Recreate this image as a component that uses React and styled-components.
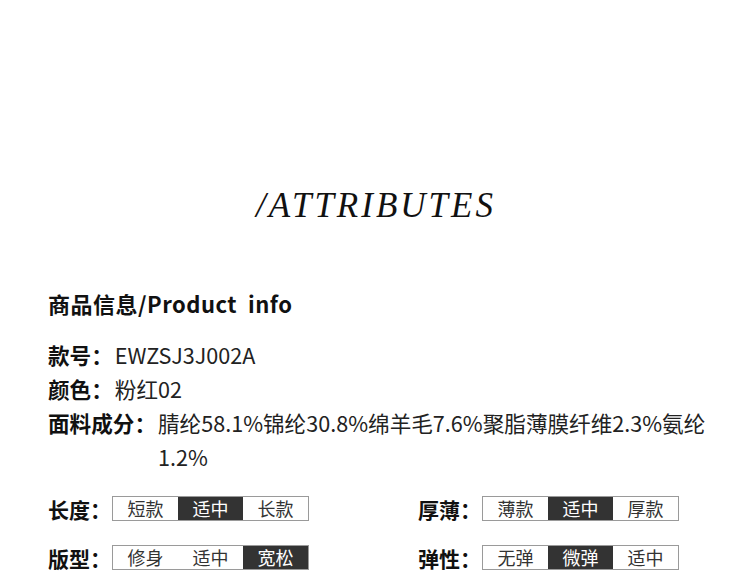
import React from "react";
import styled, { createGlobalStyle } from "styled-components";

const Global = createGlobalStyle`
  html, body { margin: 0; padding: 0; background: #fff; }
  body { font-family: "Noto Sans CJK SC", "Noto Sans", sans-serif; color: #222; }
`;

const Page = styled.div`
  width: 750px;
  height: 574px;
  overflow: hidden;
  box-sizing: border-box;
  padding: 186px 0 0 48px;
`;

const Heading = styled.h1`
  margin: 0 0 0 -48px;
  text-align: center;
  font-family: "Liberation Serif", "Times New Roman", serif;
  font-style: italic;
  font-weight: 400;
  font-size: 35px;
  line-height: 40px;
  letter-spacing: 3px;
  color: #111;
  padding-left: 2px;
`;

const SectionTitle = styled.h2`
  margin: 62px 0 0;
  font-size: 22px;
  line-height: 30px;
  letter-spacing: 0.5px;
  font-weight: 700;
  color: #111;
  white-space: pre;
`;

const InfoList = styled.div`
  margin-top: 20px;
  display: flex;
  flex-direction: column;
`;

const InfoRow = styled.div`
  display: flex;
  font-size: 21.6px;
  line-height: 34px;
  width: 662px;
`;

const Label = styled.span`
  font-weight: 700;
  color: #111;
  white-space: nowrap;
  flex: none;
  padding-right: 2px;
`;

const Value = styled.span`
  color: #222;
  flex: 1;
  overflow-wrap: anywhere;
`;

const AttrGrid = styled.div`
  margin-top: 22px;
  display: grid;
  grid-template-columns: 370px 300px;
  row-gap: 24px;
`;

const Attr = styled.div`
  display: flex;
  align-items: center;
  height: 25px;
`;

const AttrLabel = styled.span`
  width: 64px;
  flex: none;
  font-size: 21px;
  font-weight: 700;
  color: #111;
  white-space: nowrap;
`;

const Segments = styled.div`
  display: flex;
  border: 1px solid #9a9a9a;
  height: 23px;
`;

const Segment = styled.span`
  width: 65px;
  display: flex;
  align-items: center;
  justify-content: center;
  font-size: 18px;
  line-height: 23px;
  background: ${(p) => (p.$active ? "#333" : "#fff")};
  color: ${(p) => (p.$active ? "#fff" : "#333")};
`;

const attrs = [
  { label: "长度：", options: ["短款", "适中", "长款"], active: 1 },
  { label: "厚薄：", options: ["薄款", "适中", "厚款"], active: 1 },
  { label: "版型：", options: ["修身", "适中", "宽松"], active: 2 },
  { label: "弹性：", options: ["无弹", "微弹", "适中"], active: 1 },
];

export default function App() {
  return (
    <>
      <Global />
      <Page>
        <Heading>/ATTRIBUTES</Heading>
        <SectionTitle>{"商品信息/Product  info"}</SectionTitle>
        <InfoList>
          <InfoRow>
            <Label>款号：</Label>
            <Value>EWZSJ3J002A</Value>
          </InfoRow>
          <InfoRow>
            <Label>颜色：</Label>
            <Value>粉红02</Value>
          </InfoRow>
          <InfoRow>
            <Label>面料成分：</Label>
            <Value>腈纶58.1%锦纶30.8%绵羊毛7.6%聚脂薄膜纤维2.3%氨纶1.2%</Value>
          </InfoRow>
        </InfoList>
        <AttrGrid>
          {attrs.map((a) => (
            <Attr key={a.label}>
              <AttrLabel>{a.label}</AttrLabel>
              <Segments>
                {a.options.map((o, i) => (
                  <Segment key={o} $active={i === a.active}>
                    {o}
                  </Segment>
                ))}
              </Segments>
            </Attr>
          ))}
        </AttrGrid>
      </Page>
    </>
  );
}
